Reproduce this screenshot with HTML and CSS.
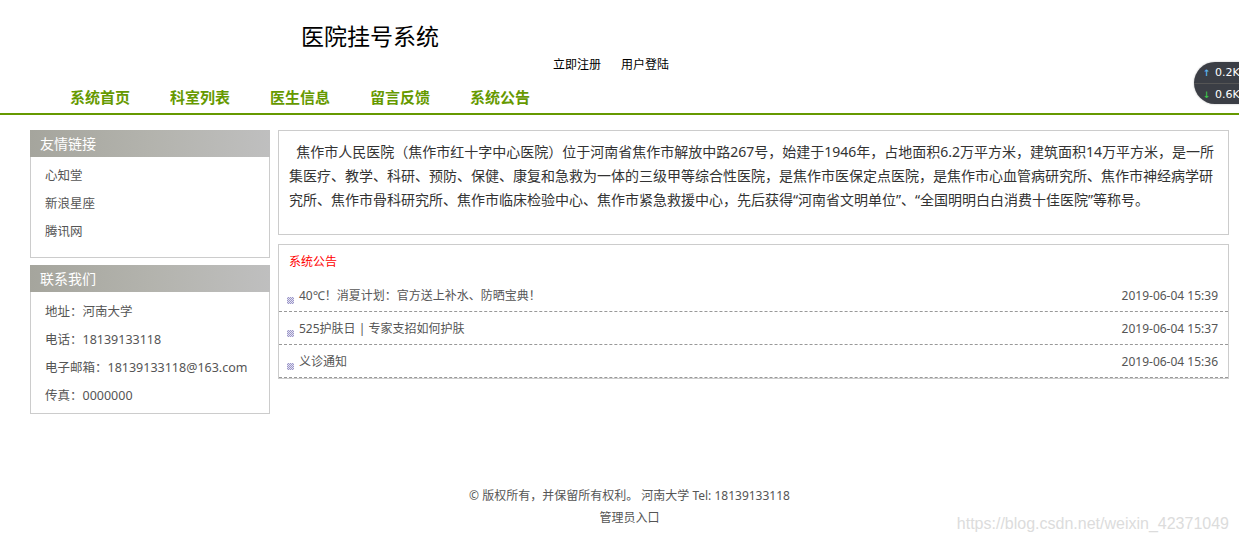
FILE: index.html
```html
<!DOCTYPE html>
<html lang="zh">
<head>
<meta charset="utf-8">
<title>医院挂号系统</title>
<link rel="stylesheet" href="styles.css">
</head>
<body>
<div class="top">
  <h1 class="logo">医院挂号系统</h1>
  <div class="user-links"><a href="#">立即注册</a><a href="#">用户登陆</a></div>
</div>
<nav class="nav">
  <a href="#">系统首页</a><a href="#">科室列表</a><a href="#">医生信息</a><a href="#">留言反馈</a><a href="#">系统公告</a>
</nav>
<div class="main">
  <aside class="sidebar">
    <div class="box links-box">
      <div class="box-head">友情链接</div>
      <ul class="box-list">
        <li><a href="#">心知堂</a></li>
        <li><a href="#">新浪星座</a></li>
        <li><a href="#">腾讯网</a></li>
      </ul>
    </div>
    <div class="box contact-box">
      <div class="box-head">联系我们</div>
      <ul class="box-list">
        <li>地址：河南大学</li>
        <li>电话：18139133118</li>
        <li>电子邮箱：18139133118@163.com</li>
        <li>传真：0000000</li>
      </ul>
    </div>
  </aside>
  <section class="content">
    <div class="intro">
      <p>&nbsp;&nbsp;焦作市人民医院（焦作市红十字中心医院）位于河南省焦作市解放中路267号，始建于1946年，占地面积6.2万平方米，建筑面积14万平方米，是一所集医疗、教学、科研、预防、保健、康复和急救为一体的三级甲等综合性医院，是焦作市医保定点医院，是焦作市心血管病研究所、焦作市神经病学研究所、焦作市骨科研究所、焦作市临床检验中心、焦作市紧急救援中心，先后获得“河南省文明单位”、“全国明明白白消费十佳医院”等称号。</p>
    </div>
    <div class="notice">
      <div class="notice-title">系统公告</div>
      <ul class="notice-list">
        <li><span class="dot"></span><a href="#">40℃！消夏计划：官方送上补水、防晒宝典！</a><span class="date">2019-06-04 15:39</span></li>
        <li><span class="dot"></span><a href="#">525护肤日 | 专家支招如何护肤</a><span class="date">2019-06-04 15:37</span></li>
        <li><span class="dot"></span><a href="#">义诊通知</a><span class="date">2019-06-04 15:36</span></li>
      </ul>
    </div>
  </section>
</div>
<footer class="footer">
  <p>© 版权所有，并保留所有权利。 河南大学 Tel: 18139133118</p>
  <p><a href="#">管理员入口</a></p>
</footer>
<div class="speed">
  <div class="speed-row"><span class="up">↑</span>0.2K</div>
  <div class="speed-row"><span class="down">↓</span>0.6K</div>
</div>
<div class="watermark">https://blog.csdn.net/weixin_42371049</div>
</body>
</html>
```
FILE: styles.css
```css
html, body {
  margin: 0;
  padding: 0;
  overflow: hidden;
}
body {
  position: relative;
  width: 1239px;
  height: 543px;
  font-family: "Noto Sans", "Noto Sans CJK SC", sans-serif;
  color: #333;
  background: #fff;
}
a { text-decoration: none; color: inherit; }
ul { list-style: none; margin: 0; padding: 0; }
p { margin: 0; }

.top { padding-left: 301px; }
.logo {
  margin: 20px 0 0;
  font-family: "Noto Sans CJK SC", sans-serif;
  font-size: 23px;
  font-weight: normal;
  line-height: 30px;
  color: #000;
}
.user-links {
  margin-top: 7px;
  padding-left: 252px;
  display: flex;
  gap: 20px;
  font-size: 12px;
  line-height: 16px;
  color: #000;
}

.nav {
  display: flex;
  gap: 40px;
  padding: 14px 0 6px 70px;
  border-bottom: 2px solid #669900;
}
.nav a {
  font-size: 15px;
  font-weight: bold;
  line-height: 20px;
  color: #669900;
}

.main {
  display: flex;
  gap: 8px;
  margin-top: 15px;
  padding: 0 10px 0 30px;
  align-items: flex-start;
}
.sidebar {
  width: 240px;
  flex: none;
  display: flex;
  flex-direction: column;
  gap: 7px;
}
.box {
  border: 1px solid #ccc;
  border-top: none;
}
.box-head {
  margin: 0 -1px;
  height: 27px;
  line-height: 27px;
  padding-left: 10px;
  font-size: 14px;
  color: #fff;
  background: linear-gradient(90deg, #a5a59d 0%, #b3b3ad 50%, #bfbfbf 100%);
}
.box-list {
  padding: 5px 0 11px 14px;
  font-size: 12.5px;
  line-height: 28px;
  color: #555;
}
.contact-box .box-list { padding: 6px 0 3px 14px; }

.content {
  flex: 1;
  display: flex;
  flex-direction: column;
  gap: 9px;
}
.intro {
  border: 1px solid #ccc;
  padding: 9px 10px 22px 10px;
  font-size: 14px;
  line-height: 24px;
  color: #333;
}
.notice {
  border: 1px solid #ccc;
}
.notice-title {
  height: 34px;
  line-height: 34px;
  padding-left: 10px;
  font-size: 12px;
  color: #ff0000;
}
.notice-list li {
  display: flex;
  align-items: center;
  height: 32px;
  border-bottom: 1px dashed #999;
  padding: 0 10px 0 8px;
  font-size: 12px;
  color: #555;
}
.dot {
  width: 7px;
  height: 7px;
  margin: 10px 5px 0 0;
  flex: none;
  background: repeating-conic-gradient(#9b97c8 0 25%, #e4e2f2 0 50%) 0 0 / 2px 2px;
}
.notice-list a { flex: 1; }
.date { font-size: 12px; }

.footer {
  margin-top: 71px;
  padding: 0 10px 0 30px;
  text-align: center;
  font-size: 12px;
  line-height: 22px;
  color: #555;
}

.speed {
  position: absolute;
  top: 62px;
  left: 1194px;
  width: 70px;
  height: 42px;
  border-radius: 21px;
  background: #3b3e45;
  box-shadow: 0 0 2px rgba(0,0,0,0.3);
  color: #fff;
  font-family: "DejaVu Sans", sans-serif;
  font-size: 11px;
}
.speed-row {
  height: 21px;
  line-height: 21px;
  padding-left: 9px;
}
.speed-row + .speed-row { border-top: 1px solid #555; height: 20px; }
.speed-row span { display: inline-block; width: 8px; margin-right: 4px; font-size: 9px; font-weight: bold; }
.up { color: #5ab4f0; }
.down { color: #3cc04a; }

.watermark {
  position: absolute;
  right: 10px;
  top: 514px;
  font-family: "Liberation Sans", Arial, sans-serif;
  font-size: 16px;
  line-height: 20px;
  color: #dcdcdc;
}
```
